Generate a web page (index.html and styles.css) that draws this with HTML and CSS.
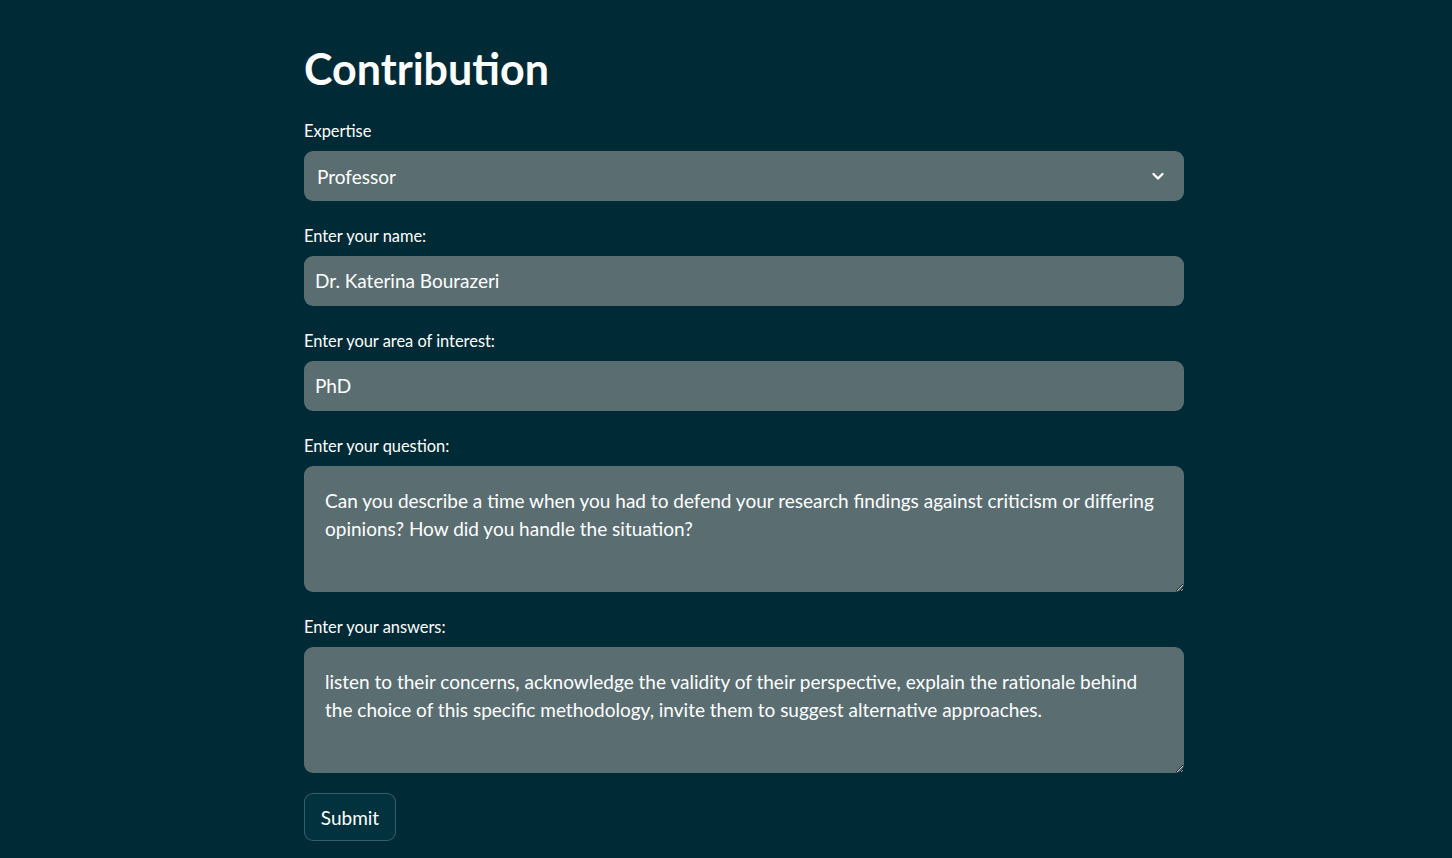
FILE: index.html
```html
<!DOCTYPE html>
<html lang="en">
<head>
<meta charset="utf-8">
<title>Contribution</title>
<link rel="stylesheet" href="styles.css">
</head>
<body>
<main class="page">
  <h1 class="title">Contribution</h1>

  <div class="field">
    <label class="label">Expertise</label>
    <div class="select">
      <span class="value">Professor</span>
      <svg class="chevron" width="14" height="10" viewBox="0 0 14 10"><path d="M2.5 3l4.5 4.5L11.5 3" fill="none" stroke="#ffffff" stroke-width="2.4" stroke-linecap="round" stroke-linejoin="round"/></svg>
    </div>
  </div>

  <div class="field">
    <label class="label">Enter your name:</label>
    <div class="input">Dr. Katerina Bourazeri</div>
  </div>

  <div class="field">
    <label class="label">Enter your area of interest:</label>
    <div class="input">PhD</div>
  </div>

  <div class="field">
    <label class="label">Enter your question:</label>
    <textarea class="textarea" readonly>Can you describe a time when you had to defend your research findings against criticism or differing opinions? How did you handle the situation?</textarea>
  </div>

  <div class="field">
    <label class="label">Enter your answers:</label>
    <textarea class="textarea" readonly>listen to their concerns, acknowledge the validity of their perspective, explain the rationale behind the choice of this specific methodology, invite them to suggest alternative approaches.</textarea>
  </div>

  <button class="submit" type="button">Submit</button>
</main>
</body>
</html>
```

FILE: styles.css
```css
html, body {
  margin: 0;
  padding: 0;
  background: #002b36;
  color: #fafafa;
  font-family: "Lato", "Open Sans", sans-serif;
  height: 100%;
  overflow: hidden;
}

body {
  padding-left: 36px;
  box-sizing: border-box;
}

.page {
  width: 880px;
  margin: 0 auto;
  padding-top: 39px;
  display: flex;
  flex-direction: column;
}

.title {
  margin: 0 0 22px 0;
  font-size: 43px;
  font-weight: 700;
  line-height: 60px;
  color: #ffffff;
}

.field {
  display: flex;
  flex-direction: column;
  gap: 10px;
  margin-bottom: 25px;
}

.label {
  font-size: 16.4px;
  line-height: 20px;
  height: 20px;
  color: #ffffff;
}

.select, .input {
  height: 50px;
  background: #5a6e72;
  border-radius: 9px;
  display: flex;
  align-items: center;
  font-size: 19px;
  color: #ffffff;
  box-sizing: border-box;
}

.select {
  padding: 0 19px 0 13px;
  justify-content: space-between;
}

.input {
  padding: 0 11px 1px 11px;
}

.textarea {
  display: block;
  height: 126px;
  box-sizing: border-box;
  background: #5a6e72;
  border: none;
  border-radius: 9px;
  padding: 21px 21px 19px 21px;
  font-family: inherit;
  font-size: 19px;
  line-height: 28px;
  color: #ffffff;
  resize: vertical;
  outline: none;
  margin: 0;
  width: 100%;
}

.field:last-of-type {
  margin-bottom: 20px;
}

.submit {
  align-self: flex-start;
  width: 92px;
  height: 48px;
  background: #01323e;
  border: 1px solid rgba(255, 255, 255, 0.22);
  border-radius: 9px;
  color: #ffffff;
  font-family: inherit;
  font-size: 19px;
  cursor: pointer;
}
```
